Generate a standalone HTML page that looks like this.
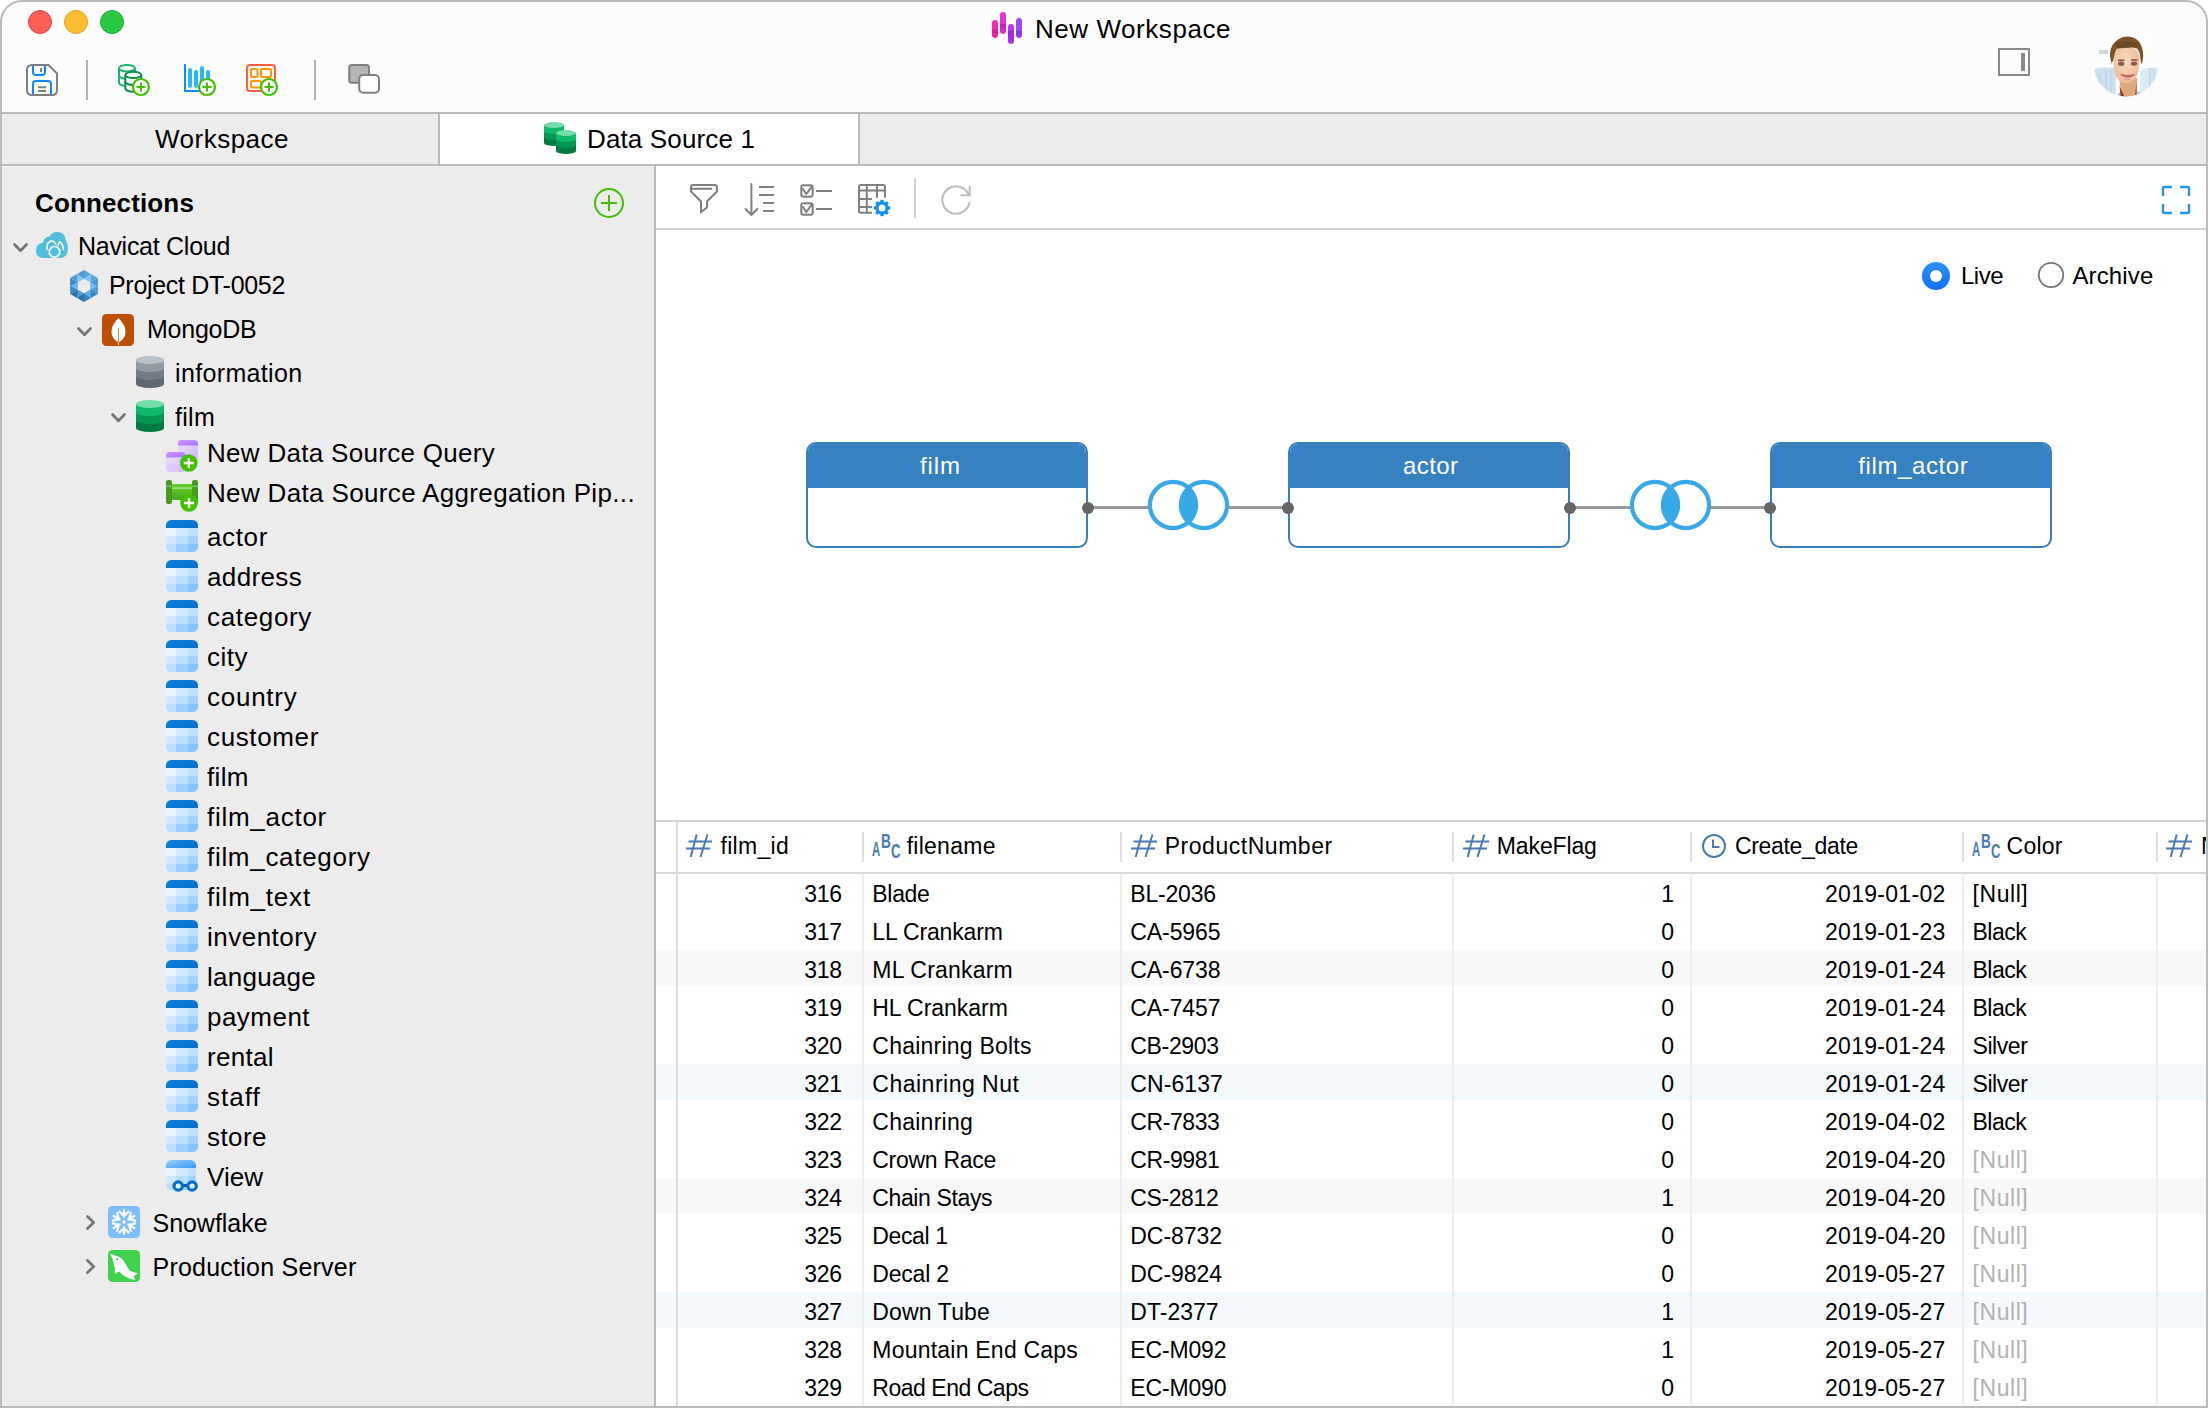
<!DOCTYPE html>
<html lang="en"><head><meta charset="utf-8"><title>New Workspace</title>
<style>
html,body{margin:0;padding:0}
body{width:2208px;height:1408px;background:#fff;overflow:hidden;position:relative;font-family:"Liberation Sans",sans-serif;color:#000}
.a{position:absolute;display:block}
.t{position:absolute;white-space:pre;display:block}
#win{position:absolute;left:0;top:0;width:2208px;height:1408px;border-radius:22px 22px 0 0;overflow:hidden;background:#fcfcfc}
#frame{position:absolute;left:0;top:0;width:2204px;height:1404px;border:2px solid #bbb;border-radius:22px 22px 0 0;pointer-events:none}
</style></head><body>
<div id="win">
<div class="a" style="left:28px;top:10px;width:22px;height:22px;border-radius:50%;background:#fe5f57;border:1px solid #e0443e"></div>
<div class="a" style="left:64px;top:10px;width:22px;height:22px;border-radius:50%;background:#febc2e;border:1px solid #dea123"></div>
<div class="a" style="left:100px;top:10px;width:22px;height:22px;border-radius:50%;background:#28c840;border:1px solid #1aab29"></div>
<div class="a" style="left:992px;top:20px;width:6px;height:18px;background:linear-gradient(180deg,#f22bb5 0%,#f22bb5 50%,#d41c98 54%,#f22bb5 100%);border-radius:3px"></div>
<div class="a" style="left:1000px;top:12px;width:6px;height:22px;background:linear-gradient(180deg,#e535cf 0%,#e535cf 52%,#c21cab 56%,#e535cf 100%);border-radius:3px"></div>
<div class="a" style="left:1008px;top:24px;width:6px;height:20px;background:linear-gradient(180deg,#b833ff 0%,#b833ff 32%,#9a27d6 36%,#b833ff 100%);border-radius:3px"></div>
<div class="a" style="left:1016px;top:18px;width:6px;height:20px;background:linear-gradient(180deg,#9b48ff 0%,#9b48ff 62%,#7b36d8 66%,#9b48ff 100%);border-radius:3px"></div>
<span class="t" style="left:1035.00px;top:11.99px;font-size:26px;line-height:34px;letter-spacing:0.553px;">New Workspace</span>
<svg class="a" style="left:26px;top:64px" width="32" height="32" viewBox="0 0 32 32"><path d="M6,1 H22.5 L31,9.5 V26 Q31,31 26,31 H6 Q1,31 1,26 V6 Q1,1 6,1 Z" fill="#fff" stroke="#7f7f7f" stroke-width="2" stroke-linejoin="round"/><path d="M7,2 V8 Q7,11 10,11 H16 Q19,11 19,8 V2" fill="none" stroke="#0a8cff" stroke-width="2"/><path d="M15,4 V8" stroke="#7f7f7f" stroke-width="2"/><path d="M7,30 V20 Q7,17 10,17 H22 Q25,17 25,20 V30" fill="none" stroke="#0a8cff" stroke-width="2"/><path d="M12,23.2 H20 M12,27 H20" stroke="#7f7f7f" stroke-width="2"/></svg>
<div class="a" style="left:86px;top:60px;width:2px;height:40px;background:#b4b4b4;"></div>
<div class="a" style="left:314px;top:60px;width:2px;height:40px;background:#b4b4b4;"></div>
<svg class="a" style="left:116px;top:62px" width="36" height="36" viewBox="0 0 36 36"><path d="M3,6.2 V20.8 A8.0,3.2 0 0 0 19,20.8 V6.2" fill="#fcfcfc" stroke="#1db36b" stroke-width="2"/><ellipse cx="11.0" cy="6.2" rx="8.0" ry="3.2" fill="#fcfcfc" stroke="#1db36b" stroke-width="2"/><path d="M3,13.5 A8.0,3.2 0 0 0 19,13.5" fill="none" stroke="#1db36b" stroke-width="2"/><path d="M9.3,12.899999999999999 V26.5 A8.0,3.2 0 0 0 25.3,26.5 V12.899999999999999" fill="#fcfcfc" stroke="#0a8f4e" stroke-width="2"/><ellipse cx="17.3" cy="12.899999999999999" rx="8.0" ry="3.2" fill="#fcfcfc" stroke="#0a8f4e" stroke-width="2"/><path d="M9.3,19.7 A8.0,3.2 0 0 0 25.3,19.7" fill="none" stroke="#0a8f4e" stroke-width="2"/><circle cx="24.9" cy="25" r="8" fill="#fff" stroke="#42be00" stroke-width="2.2"/><path d="M20.4,25 H29.4 M24.9,20.5 V29.5" stroke="#42be00" stroke-width="2.2"/></svg>
<svg class="a" style="left:182px;top:62px" width="36" height="36" viewBox="0 0 36 36"><path d="M3,2 V29 H19" fill="none" stroke="#0a8cff" stroke-width="2"/><path d="M8,8 V24 M14,10 V24 M20,6 V24 M26,10 V24" stroke="#2bb5ff" stroke-width="4" stroke-linecap="round"/><circle cx="25" cy="25" r="8" fill="#fff" stroke="#42be00" stroke-width="2.2"/><path d="M20.5,25 H29.5 M25,20.5 V29.5" stroke="#42be00" stroke-width="2.2"/></svg>
<svg class="a" style="left:244px;top:62px" width="36" height="36" viewBox="0 0 36 36"><rect x="3" y="3" width="28" height="26" rx="3" fill="none" stroke="#ff623b" stroke-width="2"/><rect x="7" y="7" width="6.5" height="8" rx="1.5" fill="none" stroke="#ff9500" stroke-width="2"/><rect x="17" y="7" width="10" height="8" rx="1.5" fill="none" stroke="#ff9500" stroke-width="2"/><rect x="7" y="19" width="10" height="6.5" rx="1.5" fill="none" stroke="#ff9500" stroke-width="2"/><circle cx="25" cy="25" r="8" fill="#fff" stroke="#42be00" stroke-width="2.2"/><path d="M20.5,25 H29.5 M25,20.5 V29.5" stroke="#42be00" stroke-width="2.2"/></svg>
<svg class="a" style="left:346px;top:62px" width="36" height="34" viewBox="0 0 36 34"><rect x="3.2" y="3" width="19.8" height="17.8" rx="2.5" fill="#b5b5b5" stroke="#7f7f7f" stroke-width="2"/><rect x="13.2" y="13" width="19.8" height="17.8" rx="4" fill="#fff" stroke="#7f7f7f" stroke-width="2"/></svg>
<svg class="a" style="left:1996px;top:46px" width="36" height="32" viewBox="0 0 36 32"><rect x="3" y="3" width="30" height="26" fill="none" stroke="#8a8a8a" stroke-width="2"/><rect x="25" y="7" width="4" height="18" fill="#8a8a8a"/></svg>
<svg class="a" style="left:2092px;top:30px" width="68" height="68" viewBox="0 0 68 68"><defs><clipPath id="av"><circle cx="34" cy="34" r="32.5"/></clipPath><radialGradient id="fg" cx=".45" cy=".4" r=".7"><stop offset="0" stop-color="#f8d9bd"/><stop offset="1" stop-color="#ecb792"/></radialGradient></defs><g clip-path="url(#av)"><rect width="68" height="68" fill="#fcfdfe"/><path d="M0,40 Q10,36 18,38 L24,37 V70 H0 Z" fill="#cfe2f0"/><path d="M8,44 V66 M14,40 V68 M19,40 V68" stroke="#b9d3e8" stroke-width="2.5" opacity=".7"/><path d="M48,40 Q58,36 68,38 V70 H48 Z" fill="#dcecf6"/><path d="M58,38 V62 M62,38 V58" stroke="#bcd6e8" stroke-width="2.5" opacity=".7"/><rect x="7" y="20" width="9" height="4" fill="#cdd9d8"/><path d="M24,66 L30,60 H42 L52,64 L50,70 H24 Z" fill="#a9b9ec"/><path d="M27,48 H45 V68 H30 Z" fill="#dfa57c"/><path d="M27.5,56 L33,68 H29 Z" fill="#8b3510"/><path d="M44.5,54 V68 H42.5 Z" fill="#9a4a20"/><path d="M21.3,30 Q21,16.5 34.3,16.5 Q47.6,16.5 47.4,30 Q47.6,44 42,50 Q38,53.5 34.3,53.5 Q30.5,53.5 26.5,50 Q21.3,44 21.3,30 Z" fill="url(#fg)"/><path d="M19.5,33 Q16,23 20.5,15 Q26,6.5 36,6.5 Q46,7 49.5,16 Q52.5,24 50,34 Q48.5,33 48.3,28 Q48,22 45,18.5 Q36,16 25,18.5 Q22.5,22 22,27 Q21.5,31 19.5,33 Z" fill="#7d5228"/><path d="M24,14 Q34,8 47,15 Q40,18 25,18.5 Z" fill="#6a4a22"/><ellipse cx="29.2" cy="33.8" rx="3.2" ry="2.2" fill="#8a5a45"/><ellipse cx="42" cy="33.6" rx="3.2" ry="2.2" fill="#8a5a50"/><path d="M26,30.3 H32.5 M39,30 H45.5" stroke="#8a4a2a" stroke-width="1.6"/><path d="M29,44.5 Q35.5,49.5 42.5,44.5 Q35.5,47 29,44.5 Z" fill="#f7e6e6" stroke="#c0625f" stroke-width="1.4"/><path d="M32,49.5 H39" stroke="#e89a9a" stroke-width="1.6"/></g></svg>
<div class="a" style="left:0px;top:112px;width:2208px;height:2px;background:#bababa;"></div>
<div class="a" style="left:0px;top:114px;width:2208px;height:50px;background:#ececec;"></div>
<div class="a" style="left:440px;top:114px;width:418px;height:52px;background:#fff;"></div>
<div class="a" style="left:438px;top:114px;width:2px;height:50px;background:#bababa;"></div>
<div class="a" style="left:858px;top:114px;width:2px;height:50px;background:#bababa;"></div>
<div class="a" style="left:0px;top:164px;width:440px;height:2px;background:#bababa;"></div>
<div class="a" style="left:858px;top:164px;width:1350px;height:2px;background:#bababa;"></div>
<div class="a" style="left:440px;top:164px;width:418px;height:2px;background:#bababa;"></div>
<span class="t" style="left:155.00px;top:122.49px;font-size:26px;line-height:34px;letter-spacing:0.492px;">Workspace</span>
<span class="t" style="left:587.00px;top:122.49px;font-size:26px;line-height:34px;letter-spacing:0.137px;">Data Source 1</span>
<svg class="a" style="left:542px;top:120px" width="36" height="36" viewBox="0 0 36 36"><path d="M2,5 V23 A10.0,3 0 0 0 22,23 V5 Z" fill="#007a41"/><path d="M2,5 V17.0 A10.0,3 0 0 0 22,17.0 V5 Z" fill="#059652"/><path d="M2,5 V11.0 A10.0,3 0 0 0 22,11.0 V5 Z" fill="#0db96b"/><ellipse cx="12.0" cy="5" rx="10.0" ry="3" fill="#74deab"/><path d="M14,13 V31 A10.0,3 0 0 0 34,31 V13 Z" fill="#007a41"/><path d="M14,13 V25.0 A10.0,3 0 0 0 34,25.0 V13 Z" fill="#059652"/><path d="M14,13 V19.0 A10.0,3 0 0 0 34,19.0 V13 Z" fill="#0db96b"/><ellipse cx="24.0" cy="13" rx="10.0" ry="3" fill="#74deab"/></svg>
<div class="a" style="left:0px;top:166px;width:654px;height:1242px;background:#ececec;"></div>
<div class="a" style="left:654px;top:166px;width:2px;height:1242px;background:#bababa;"></div>
<div class="a" style="left:0px;top:166px;width:654px;height:1px;background:#f1f1f1;"></div>
<span class="t" style="left:35.00px;top:185.99px;font-size:26px;line-height:34px;letter-spacing:0.140px;font-weight:700;">Connections</span>
<svg class="a" style="left:592px;top:186px" width="34" height="34" viewBox="0 0 34 34"><circle cx="17" cy="17" r="14" fill="none" stroke="#42be00" stroke-width="2"/><path d="M9,17 H25 M17,9 V25" stroke="#42be00" stroke-width="2"/></svg>
<svg class="a" style="left:11px;top:241px" width="20" height="14" viewBox="0 0 20 14"><path d="M3.5,3.5 L9.5,9.7 L15.5,3.5" fill="none" stroke="#767676" stroke-width="2.8" stroke-linecap="round" stroke-linejoin="round"/></svg>
<svg class="a" style="left:36px;top:230px" width="34" height="30" viewBox="0 0 34 30"><path d="M8,28 Q0,28 0,20.5 Q0,13.5 7,12.5 Q8,7 13.5,6.5 Q16,1.5 22,2 Q29,2.5 29.5,10 Q32,13 32,18 Q32,28 23,28 Z" fill="#4fbfdc"/><circle cx="18.5" cy="21.8" r="5.3" fill="none" stroke="#fff" stroke-width="1.7"/><path d="M11.2,19.5 Q10,13 15,11 Q18.5,10.5 19.8,14.5" fill="none" stroke="#fff" stroke-width="1.6" stroke-linecap="round"/><path d="M22.3,15.5 Q22.5,12.5 23.8,11.8 Q27.5,14.5 27.3,19.5" fill="none" stroke="#fff" stroke-width="1.6" stroke-linecap="round"/></svg>
<span class="t" style="left:78.00px;top:229.64px;font-size:25px;line-height:32px;letter-spacing:-0.279px;">Navicat Cloud</span>
<svg class="a" style="left:70px;top:270px" width="28" height="32" viewBox="0 0 28 32"><path d="M14.0,0.0 L27.9,8.0 L20.5,12.2 L14.0,8.5 Z" fill="#5aa9dd"/><path d="M20.9,4.0 L20.5,12.2 L14.0,8.5 Z" fill="#7fc8ff"/><path d="M27.9,8.0 L27.9,24.0 L20.5,19.8 L20.5,12.2 Z" fill="#4a97cf"/><path d="M27.9,16.0 L20.5,19.8 L20.5,12.2 Z" fill="#6bbcf7"/><path d="M27.9,24.0 L14.0,32.0 L14.0,23.5 L20.5,19.8 Z" fill="#3b84bd"/><path d="M20.9,28.0 L14.0,23.5 L20.5,19.8 Z" fill="#5aaeee"/><path d="M14.0,32.0 L0.1,24.0 L7.5,19.8 L14.0,23.5 Z" fill="#2f6fa3"/><path d="M7.1,28.0 L7.5,19.8 L14.0,23.5 Z" fill="#4f9fe0"/><path d="M0.1,24.0 L0.1,8.0 L7.5,12.2 L7.5,19.8 Z" fill="#3d89c4"/><path d="M0.1,16.0 L7.5,12.2 L7.5,19.8 Z" fill="#66b8f5"/><path d="M0.1,8.0 L14.0,0.0 L14.0,8.5 L7.5,12.2 Z" fill="#4b9bd4"/><path d="M7.1,4.0 L14.0,8.5 L7.5,12.2 Z" fill="#86ccff"/></svg>
<span class="t" style="left:109.00px;top:268.84px;font-size:25px;line-height:32px;letter-spacing:-0.309px;">Project DT-0052</span>
<svg class="a" style="left:75px;top:325px" width="20" height="14" viewBox="0 0 20 14"><path d="M3.5,3.5 L9.5,9.7 L15.5,3.5" fill="none" stroke="#767676" stroke-width="2.8" stroke-linecap="round" stroke-linejoin="round"/></svg>
<svg class="a" style="left:102px;top:314px" width="32" height="32" viewBox="0 0 32 32"><rect width="32" height="32" rx="4.5" fill="#bf4f00"/><path d="M16.5,4 Q23.5,11 23.5,17.5 Q23.5,24.5 17.2,28 L17,31 H16 L15.8,28 Q9.5,24.5 9.5,17.5 Q9.5,11 16.5,4 Z" fill="#fff"/><path d="M16.5,14 V29" stroke="#d98a55" stroke-width="1"/></svg>
<span class="t" style="left:147.00px;top:313.34px;font-size:25px;line-height:32px;letter-spacing:-0.238px;">MongoDB</span>
<svg class="a" style="left:136px;top:356px" width="28" height="32" viewBox="0 0 28 32"><path d="M0,4 V28 A14.0,4 0 0 0 28,28 V4 Z" fill="#5f6772"/><path d="M0,4 V20.0 A14.0,4 0 0 0 28,20.0 V4 Z" fill="#737d88"/><path d="M0,4 V12.0 A14.0,4 0 0 0 28,12.0 V4 Z" fill="#949ba4"/><ellipse cx="14.0" cy="4" rx="14.0" ry="4" fill="#bbc0c8"/></svg>
<span class="t" style="left:175.00px;top:357.04px;font-size:25px;line-height:32px;letter-spacing:0.349px;">information</span>
<svg class="a" style="left:109px;top:411px" width="20" height="14" viewBox="0 0 20 14"><path d="M3.5,3.5 L9.5,9.7 L15.5,3.5" fill="none" stroke="#767676" stroke-width="2.8" stroke-linecap="round" stroke-linejoin="round"/></svg>
<svg class="a" style="left:136px;top:400px" width="28" height="32" viewBox="0 0 28 32"><path d="M0,4 V28 A14.0,4 0 0 0 28,28 V4 Z" fill="#007a41"/><path d="M0,4 V20.0 A14.0,4 0 0 0 28,20.0 V4 Z" fill="#059652"/><path d="M0,4 V12.0 A14.0,4 0 0 0 28,12.0 V4 Z" fill="#0db96b"/><ellipse cx="14.0" cy="4" rx="14.0" ry="4" fill="#74deab"/></svg>
<span class="t" style="left:175.00px;top:400.94px;font-size:25px;line-height:32px;letter-spacing:0.280px;">film</span>
<svg class="a" style="left:164px;top:438px" width="36" height="36" viewBox="0 0 36 36"><defs><linearGradient id="pg" x1="0" y1="0" x2="1" y2="1"><stop offset="0" stop-color="#cf9bff"/><stop offset="1" stop-color="#a470ff"/></linearGradient></defs><g><clipPath id="c1"><rect x="14" y="2" width="20" height="20" rx="3.5"/></clipPath><g clip-path="url(#c1)"><rect x="14" y="2" width="20" height="20" fill="#e6d6ff"/><rect x="14" y="2" width="20" height="5.5" fill="url(#pg)"/><rect x="20.6" y="7.5" width="6.800000000000001" height="20" fill="#dcc8ff" opacity=".6"/><rect x="27.4" y="7.5" width="6.800000000000001" height="20" fill="#d2b8ff" opacity=".7"/><rect x="14" y="14.4" width="20" height="20" fill="#cfb5ff" opacity=".35"/></g></g><g><clipPath id="c2"><rect x="2" y="14" width="19.5" height="20" rx="3.5"/></clipPath><g clip-path="url(#c2)"><rect x="2" y="14" width="19.5" height="20" fill="#e6d6ff"/><rect x="2" y="14" width="19.5" height="5.5" fill="url(#pg)"/><rect x="8.435" y="19.5" width="6.630000000000001" height="20" fill="#dcc8ff" opacity=".6"/><rect x="15.065000000000001" y="19.5" width="6.630000000000001" height="20" fill="#d2b8ff" opacity=".7"/><rect x="2" y="26.4" width="19.5" height="20" fill="#cfb5ff" opacity=".35"/></g></g><circle cx="24.8" cy="25" r="8.8" fill="#40c200"/><path d="M19.8,25 H29.8 M24.8,20 V30" stroke="#fff" stroke-width="2.4"/></svg>
<span class="t" style="left:207.00px;top:436.09px;font-size:26px;line-height:34px;letter-spacing:0.295px;">New Data Source Query</span>
<svg class="a" style="left:164px;top:478px" width="36" height="36" viewBox="0 0 36 36"><defs><linearGradient id="gg" x1="0" y1="0" x2="0" y2="1"><stop offset="0" stop-color="#62d02a"/><stop offset="1" stop-color="#4aa620"/></linearGradient></defs><rect x="7" y="6" width="22" height="16" fill="url(#gg)"/><rect x="7" y="9.2" width="22" height="1.8" fill="#a5e38a" opacity=".8"/><rect x="2" y="2" width="6" height="24" rx="2" fill="#459a1e"/><rect x="28" y="2" width="6" height="24" rx="2" fill="#459a1e"/><rect x="2" y="7.5" width="6" height="1.6" fill="#7dc25c"/><rect x="28" y="7.5" width="6" height="1.6" fill="#7dc25c"/><circle cx="25" cy="25" r="8.8" fill="#40c200"/><path d="M20,25 H30 M25,20 V30" stroke="#fff" stroke-width="2.4"/></svg>
<span class="t" style="left:207.00px;top:475.89px;font-size:26px;line-height:34px;letter-spacing:0.345px;">New Data Source Aggregation Pip...</span>
<svg class="a" style="left:166px;top:520px" width="32" height="32" viewBox="0 0 32 32"><defs><clipPath id="t0"><rect width="32" height="32" rx="5.5"/></clipPath><linearGradient id="t0h" x1="0" y1="0" x2="1" y2="1"><stop offset="0" stop-color="#0a80d8"/><stop offset="1" stop-color="#0670c8"/></linearGradient></defs><g clip-path="url(#t0)"><rect width="32" height="32" fill="#cfe7ff"/><rect x="0" y="8" width="10" height="8" fill="#e8f3ff"/><rect x="10" y="8" width="12" height="8" fill="#d2e9ff"/><rect x="22" y="8" width="10" height="8" fill="#bfdfff"/><rect x="0" y="16" width="10" height="8" fill="#d2e9ff"/><rect x="10" y="16" width="12" height="8" fill="#bcdeff"/><rect x="22" y="16" width="10" height="8" fill="#a3d2ff"/><rect x="0" y="24" width="10" height="8" fill="#bcdeff"/><rect x="10" y="24" width="12" height="8" fill="#9dcfff"/><rect x="22" y="24" width="10" height="8" fill="#85c4ff"/><rect width="32" height="8" fill="url(#t0h)"/></g></svg>
<span class="t" style="left:207.00px;top:520.19px;font-size:26px;line-height:34px;letter-spacing:0.639px;">actor</span>
<svg class="a" style="left:166px;top:560px" width="32" height="32" viewBox="0 0 32 32"><defs><clipPath id="t1"><rect width="32" height="32" rx="5.5"/></clipPath><linearGradient id="t1h" x1="0" y1="0" x2="1" y2="1"><stop offset="0" stop-color="#0a80d8"/><stop offset="1" stop-color="#0670c8"/></linearGradient></defs><g clip-path="url(#t1)"><rect width="32" height="32" fill="#cfe7ff"/><rect x="0" y="8" width="10" height="8" fill="#e8f3ff"/><rect x="10" y="8" width="12" height="8" fill="#d2e9ff"/><rect x="22" y="8" width="10" height="8" fill="#bfdfff"/><rect x="0" y="16" width="10" height="8" fill="#d2e9ff"/><rect x="10" y="16" width="12" height="8" fill="#bcdeff"/><rect x="22" y="16" width="10" height="8" fill="#a3d2ff"/><rect x="0" y="24" width="10" height="8" fill="#bcdeff"/><rect x="10" y="24" width="12" height="8" fill="#9dcfff"/><rect x="22" y="24" width="10" height="8" fill="#85c4ff"/><rect width="32" height="8" fill="url(#t1h)"/></g></svg>
<span class="t" style="left:207.00px;top:560.19px;font-size:26px;line-height:34px;letter-spacing:0.357px;">address</span>
<svg class="a" style="left:166px;top:600px" width="32" height="32" viewBox="0 0 32 32"><defs><clipPath id="t2"><rect width="32" height="32" rx="5.5"/></clipPath><linearGradient id="t2h" x1="0" y1="0" x2="1" y2="1"><stop offset="0" stop-color="#0a80d8"/><stop offset="1" stop-color="#0670c8"/></linearGradient></defs><g clip-path="url(#t2)"><rect width="32" height="32" fill="#cfe7ff"/><rect x="0" y="8" width="10" height="8" fill="#e8f3ff"/><rect x="10" y="8" width="12" height="8" fill="#d2e9ff"/><rect x="22" y="8" width="10" height="8" fill="#bfdfff"/><rect x="0" y="16" width="10" height="8" fill="#d2e9ff"/><rect x="10" y="16" width="12" height="8" fill="#bcdeff"/><rect x="22" y="16" width="10" height="8" fill="#a3d2ff"/><rect x="0" y="24" width="10" height="8" fill="#bcdeff"/><rect x="10" y="24" width="12" height="8" fill="#9dcfff"/><rect x="22" y="24" width="10" height="8" fill="#85c4ff"/><rect width="32" height="8" fill="url(#t2h)"/></g></svg>
<span class="t" style="left:207.00px;top:600.19px;font-size:26px;line-height:34px;letter-spacing:0.659px;">category</span>
<svg class="a" style="left:166px;top:640px" width="32" height="32" viewBox="0 0 32 32"><defs><clipPath id="t3"><rect width="32" height="32" rx="5.5"/></clipPath><linearGradient id="t3h" x1="0" y1="0" x2="1" y2="1"><stop offset="0" stop-color="#0a80d8"/><stop offset="1" stop-color="#0670c8"/></linearGradient></defs><g clip-path="url(#t3)"><rect width="32" height="32" fill="#cfe7ff"/><rect x="0" y="8" width="10" height="8" fill="#e8f3ff"/><rect x="10" y="8" width="12" height="8" fill="#d2e9ff"/><rect x="22" y="8" width="10" height="8" fill="#bfdfff"/><rect x="0" y="16" width="10" height="8" fill="#d2e9ff"/><rect x="10" y="16" width="12" height="8" fill="#bcdeff"/><rect x="22" y="16" width="10" height="8" fill="#a3d2ff"/><rect x="0" y="24" width="10" height="8" fill="#bcdeff"/><rect x="10" y="24" width="12" height="8" fill="#9dcfff"/><rect x="22" y="24" width="10" height="8" fill="#85c4ff"/><rect width="32" height="8" fill="url(#t3h)"/></g></svg>
<span class="t" style="left:207.00px;top:640.19px;font-size:26px;line-height:34px;letter-spacing:0.525px;">city</span>
<svg class="a" style="left:166px;top:680px" width="32" height="32" viewBox="0 0 32 32"><defs><clipPath id="t4"><rect width="32" height="32" rx="5.5"/></clipPath><linearGradient id="t4h" x1="0" y1="0" x2="1" y2="1"><stop offset="0" stop-color="#0a80d8"/><stop offset="1" stop-color="#0670c8"/></linearGradient></defs><g clip-path="url(#t4)"><rect width="32" height="32" fill="#cfe7ff"/><rect x="0" y="8" width="10" height="8" fill="#e8f3ff"/><rect x="10" y="8" width="12" height="8" fill="#d2e9ff"/><rect x="22" y="8" width="10" height="8" fill="#bfdfff"/><rect x="0" y="16" width="10" height="8" fill="#d2e9ff"/><rect x="10" y="16" width="12" height="8" fill="#bcdeff"/><rect x="22" y="16" width="10" height="8" fill="#a3d2ff"/><rect x="0" y="24" width="10" height="8" fill="#bcdeff"/><rect x="10" y="24" width="12" height="8" fill="#9dcfff"/><rect x="22" y="24" width="10" height="8" fill="#85c4ff"/><rect width="32" height="8" fill="url(#t4h)"/></g></svg>
<span class="t" style="left:207.00px;top:680.19px;font-size:26px;line-height:34px;letter-spacing:0.748px;">country</span>
<svg class="a" style="left:166px;top:720px" width="32" height="32" viewBox="0 0 32 32"><defs><clipPath id="t5"><rect width="32" height="32" rx="5.5"/></clipPath><linearGradient id="t5h" x1="0" y1="0" x2="1" y2="1"><stop offset="0" stop-color="#0a80d8"/><stop offset="1" stop-color="#0670c8"/></linearGradient></defs><g clip-path="url(#t5)"><rect width="32" height="32" fill="#cfe7ff"/><rect x="0" y="8" width="10" height="8" fill="#e8f3ff"/><rect x="10" y="8" width="12" height="8" fill="#d2e9ff"/><rect x="22" y="8" width="10" height="8" fill="#bfdfff"/><rect x="0" y="16" width="10" height="8" fill="#d2e9ff"/><rect x="10" y="16" width="12" height="8" fill="#bcdeff"/><rect x="22" y="16" width="10" height="8" fill="#a3d2ff"/><rect x="0" y="24" width="10" height="8" fill="#bcdeff"/><rect x="10" y="24" width="12" height="8" fill="#9dcfff"/><rect x="22" y="24" width="10" height="8" fill="#85c4ff"/><rect width="32" height="8" fill="url(#t5h)"/></g></svg>
<span class="t" style="left:207.00px;top:720.19px;font-size:26px;line-height:34px;letter-spacing:0.634px;">customer</span>
<svg class="a" style="left:166px;top:760px" width="32" height="32" viewBox="0 0 32 32"><defs><clipPath id="t6"><rect width="32" height="32" rx="5.5"/></clipPath><linearGradient id="t6h" x1="0" y1="0" x2="1" y2="1"><stop offset="0" stop-color="#0a80d8"/><stop offset="1" stop-color="#0670c8"/></linearGradient></defs><g clip-path="url(#t6)"><rect width="32" height="32" fill="#cfe7ff"/><rect x="0" y="8" width="10" height="8" fill="#e8f3ff"/><rect x="10" y="8" width="12" height="8" fill="#d2e9ff"/><rect x="22" y="8" width="10" height="8" fill="#bfdfff"/><rect x="0" y="16" width="10" height="8" fill="#d2e9ff"/><rect x="10" y="16" width="12" height="8" fill="#bcdeff"/><rect x="22" y="16" width="10" height="8" fill="#a3d2ff"/><rect x="0" y="24" width="10" height="8" fill="#bcdeff"/><rect x="10" y="24" width="12" height="8" fill="#9dcfff"/><rect x="22" y="24" width="10" height="8" fill="#85c4ff"/><rect width="32" height="8" fill="url(#t6h)"/></g></svg>
<span class="t" style="left:207.00px;top:760.19px;font-size:26px;line-height:34px;letter-spacing:0.316px;">film</span>
<svg class="a" style="left:166px;top:800px" width="32" height="32" viewBox="0 0 32 32"><defs><clipPath id="t7"><rect width="32" height="32" rx="5.5"/></clipPath><linearGradient id="t7h" x1="0" y1="0" x2="1" y2="1"><stop offset="0" stop-color="#0a80d8"/><stop offset="1" stop-color="#0670c8"/></linearGradient></defs><g clip-path="url(#t7)"><rect width="32" height="32" fill="#cfe7ff"/><rect x="0" y="8" width="10" height="8" fill="#e8f3ff"/><rect x="10" y="8" width="12" height="8" fill="#d2e9ff"/><rect x="22" y="8" width="10" height="8" fill="#bfdfff"/><rect x="0" y="16" width="10" height="8" fill="#d2e9ff"/><rect x="10" y="16" width="12" height="8" fill="#bcdeff"/><rect x="22" y="16" width="10" height="8" fill="#a3d2ff"/><rect x="0" y="24" width="10" height="8" fill="#bcdeff"/><rect x="10" y="24" width="12" height="8" fill="#9dcfff"/><rect x="22" y="24" width="10" height="8" fill="#85c4ff"/><rect width="32" height="8" fill="url(#t7h)"/></g></svg>
<span class="t" style="left:207.00px;top:800.19px;font-size:26px;line-height:34px;letter-spacing:0.730px;">film_actor</span>
<svg class="a" style="left:166px;top:840px" width="32" height="32" viewBox="0 0 32 32"><defs><clipPath id="t8"><rect width="32" height="32" rx="5.5"/></clipPath><linearGradient id="t8h" x1="0" y1="0" x2="1" y2="1"><stop offset="0" stop-color="#0a80d8"/><stop offset="1" stop-color="#0670c8"/></linearGradient></defs><g clip-path="url(#t8)"><rect width="32" height="32" fill="#cfe7ff"/><rect x="0" y="8" width="10" height="8" fill="#e8f3ff"/><rect x="10" y="8" width="12" height="8" fill="#d2e9ff"/><rect x="22" y="8" width="10" height="8" fill="#bfdfff"/><rect x="0" y="16" width="10" height="8" fill="#d2e9ff"/><rect x="10" y="16" width="12" height="8" fill="#bcdeff"/><rect x="22" y="16" width="10" height="8" fill="#a3d2ff"/><rect x="0" y="24" width="10" height="8" fill="#bcdeff"/><rect x="10" y="24" width="12" height="8" fill="#9dcfff"/><rect x="22" y="24" width="10" height="8" fill="#85c4ff"/><rect width="32" height="8" fill="url(#t8h)"/></g></svg>
<span class="t" style="left:207.00px;top:840.19px;font-size:26px;line-height:34px;letter-spacing:0.698px;">film_category</span>
<svg class="a" style="left:166px;top:880px" width="32" height="32" viewBox="0 0 32 32"><defs><clipPath id="t9"><rect width="32" height="32" rx="5.5"/></clipPath><linearGradient id="t9h" x1="0" y1="0" x2="1" y2="1"><stop offset="0" stop-color="#0a80d8"/><stop offset="1" stop-color="#0670c8"/></linearGradient></defs><g clip-path="url(#t9)"><rect width="32" height="32" fill="#cfe7ff"/><rect x="0" y="8" width="10" height="8" fill="#e8f3ff"/><rect x="10" y="8" width="12" height="8" fill="#d2e9ff"/><rect x="22" y="8" width="10" height="8" fill="#bfdfff"/><rect x="0" y="16" width="10" height="8" fill="#d2e9ff"/><rect x="10" y="16" width="12" height="8" fill="#bcdeff"/><rect x="22" y="16" width="10" height="8" fill="#a3d2ff"/><rect x="0" y="24" width="10" height="8" fill="#bcdeff"/><rect x="10" y="24" width="12" height="8" fill="#9dcfff"/><rect x="22" y="24" width="10" height="8" fill="#85c4ff"/><rect width="32" height="8" fill="url(#t9h)"/></g></svg>
<span class="t" style="left:207.00px;top:880.19px;font-size:26px;line-height:34px;letter-spacing:0.788px;">film_text</span>
<svg class="a" style="left:166px;top:920px" width="32" height="32" viewBox="0 0 32 32"><defs><clipPath id="t10"><rect width="32" height="32" rx="5.5"/></clipPath><linearGradient id="t10h" x1="0" y1="0" x2="1" y2="1"><stop offset="0" stop-color="#0a80d8"/><stop offset="1" stop-color="#0670c8"/></linearGradient></defs><g clip-path="url(#t10)"><rect width="32" height="32" fill="#cfe7ff"/><rect x="0" y="8" width="10" height="8" fill="#e8f3ff"/><rect x="10" y="8" width="12" height="8" fill="#d2e9ff"/><rect x="22" y="8" width="10" height="8" fill="#bfdfff"/><rect x="0" y="16" width="10" height="8" fill="#d2e9ff"/><rect x="10" y="16" width="12" height="8" fill="#bcdeff"/><rect x="22" y="16" width="10" height="8" fill="#a3d2ff"/><rect x="0" y="24" width="10" height="8" fill="#bcdeff"/><rect x="10" y="24" width="12" height="8" fill="#9dcfff"/><rect x="22" y="24" width="10" height="8" fill="#85c4ff"/><rect width="32" height="8" fill="url(#t10h)"/></g></svg>
<span class="t" style="left:207.00px;top:920.19px;font-size:26px;line-height:34px;letter-spacing:0.488px;">inventory</span>
<svg class="a" style="left:166px;top:960px" width="32" height="32" viewBox="0 0 32 32"><defs><clipPath id="t11"><rect width="32" height="32" rx="5.5"/></clipPath><linearGradient id="t11h" x1="0" y1="0" x2="1" y2="1"><stop offset="0" stop-color="#0a80d8"/><stop offset="1" stop-color="#0670c8"/></linearGradient></defs><g clip-path="url(#t11)"><rect width="32" height="32" fill="#cfe7ff"/><rect x="0" y="8" width="10" height="8" fill="#e8f3ff"/><rect x="10" y="8" width="12" height="8" fill="#d2e9ff"/><rect x="22" y="8" width="10" height="8" fill="#bfdfff"/><rect x="0" y="16" width="10" height="8" fill="#d2e9ff"/><rect x="10" y="16" width="12" height="8" fill="#bcdeff"/><rect x="22" y="16" width="10" height="8" fill="#a3d2ff"/><rect x="0" y="24" width="10" height="8" fill="#bcdeff"/><rect x="10" y="24" width="12" height="8" fill="#9dcfff"/><rect x="22" y="24" width="10" height="8" fill="#85c4ff"/><rect width="32" height="8" fill="url(#t11h)"/></g></svg>
<span class="t" style="left:207.00px;top:960.19px;font-size:26px;line-height:34px;letter-spacing:0.250px;">language</span>
<svg class="a" style="left:166px;top:1000px" width="32" height="32" viewBox="0 0 32 32"><defs><clipPath id="t12"><rect width="32" height="32" rx="5.5"/></clipPath><linearGradient id="t12h" x1="0" y1="0" x2="1" y2="1"><stop offset="0" stop-color="#0a80d8"/><stop offset="1" stop-color="#0670c8"/></linearGradient></defs><g clip-path="url(#t12)"><rect width="32" height="32" fill="#cfe7ff"/><rect x="0" y="8" width="10" height="8" fill="#e8f3ff"/><rect x="10" y="8" width="12" height="8" fill="#d2e9ff"/><rect x="22" y="8" width="10" height="8" fill="#bfdfff"/><rect x="0" y="16" width="10" height="8" fill="#d2e9ff"/><rect x="10" y="16" width="12" height="8" fill="#bcdeff"/><rect x="22" y="16" width="10" height="8" fill="#a3d2ff"/><rect x="0" y="24" width="10" height="8" fill="#bcdeff"/><rect x="10" y="24" width="12" height="8" fill="#9dcfff"/><rect x="22" y="24" width="10" height="8" fill="#85c4ff"/><rect width="32" height="8" fill="url(#t12h)"/></g></svg>
<span class="t" style="left:207.00px;top:1000.19px;font-size:26px;line-height:34px;letter-spacing:0.468px;">payment</span>
<svg class="a" style="left:166px;top:1040px" width="32" height="32" viewBox="0 0 32 32"><defs><clipPath id="t13"><rect width="32" height="32" rx="5.5"/></clipPath><linearGradient id="t13h" x1="0" y1="0" x2="1" y2="1"><stop offset="0" stop-color="#0a80d8"/><stop offset="1" stop-color="#0670c8"/></linearGradient></defs><g clip-path="url(#t13)"><rect width="32" height="32" fill="#cfe7ff"/><rect x="0" y="8" width="10" height="8" fill="#e8f3ff"/><rect x="10" y="8" width="12" height="8" fill="#d2e9ff"/><rect x="22" y="8" width="10" height="8" fill="#bfdfff"/><rect x="0" y="16" width="10" height="8" fill="#d2e9ff"/><rect x="10" y="16" width="12" height="8" fill="#bcdeff"/><rect x="22" y="16" width="10" height="8" fill="#a3d2ff"/><rect x="0" y="24" width="10" height="8" fill="#bcdeff"/><rect x="10" y="24" width="12" height="8" fill="#9dcfff"/><rect x="22" y="24" width="10" height="8" fill="#85c4ff"/><rect width="32" height="8" fill="url(#t13h)"/></g></svg>
<span class="t" style="left:207.00px;top:1040.19px;font-size:26px;line-height:34px;letter-spacing:0.293px;">rental</span>
<svg class="a" style="left:166px;top:1080px" width="32" height="32" viewBox="0 0 32 32"><defs><clipPath id="t14"><rect width="32" height="32" rx="5.5"/></clipPath><linearGradient id="t14h" x1="0" y1="0" x2="1" y2="1"><stop offset="0" stop-color="#0a80d8"/><stop offset="1" stop-color="#0670c8"/></linearGradient></defs><g clip-path="url(#t14)"><rect width="32" height="32" fill="#cfe7ff"/><rect x="0" y="8" width="10" height="8" fill="#e8f3ff"/><rect x="10" y="8" width="12" height="8" fill="#d2e9ff"/><rect x="22" y="8" width="10" height="8" fill="#bfdfff"/><rect x="0" y="16" width="10" height="8" fill="#d2e9ff"/><rect x="10" y="16" width="12" height="8" fill="#bcdeff"/><rect x="22" y="16" width="10" height="8" fill="#a3d2ff"/><rect x="0" y="24" width="10" height="8" fill="#bcdeff"/><rect x="10" y="24" width="12" height="8" fill="#9dcfff"/><rect x="22" y="24" width="10" height="8" fill="#85c4ff"/><rect width="32" height="8" fill="url(#t14h)"/></g></svg>
<span class="t" style="left:207.00px;top:1080.19px;font-size:26px;line-height:34px;letter-spacing:1.008px;">staff</span>
<svg class="a" style="left:166px;top:1120px" width="32" height="32" viewBox="0 0 32 32"><defs><clipPath id="t15"><rect width="32" height="32" rx="5.5"/></clipPath><linearGradient id="t15h" x1="0" y1="0" x2="1" y2="1"><stop offset="0" stop-color="#0a80d8"/><stop offset="1" stop-color="#0670c8"/></linearGradient></defs><g clip-path="url(#t15)"><rect width="32" height="32" fill="#cfe7ff"/><rect x="0" y="8" width="10" height="8" fill="#e8f3ff"/><rect x="10" y="8" width="12" height="8" fill="#d2e9ff"/><rect x="22" y="8" width="10" height="8" fill="#bfdfff"/><rect x="0" y="16" width="10" height="8" fill="#d2e9ff"/><rect x="10" y="16" width="12" height="8" fill="#bcdeff"/><rect x="22" y="16" width="10" height="8" fill="#a3d2ff"/><rect x="0" y="24" width="10" height="8" fill="#bcdeff"/><rect x="10" y="24" width="12" height="8" fill="#9dcfff"/><rect x="22" y="24" width="10" height="8" fill="#85c4ff"/><rect width="32" height="8" fill="url(#t15h)"/></g></svg>
<span class="t" style="left:207.00px;top:1120.19px;font-size:26px;line-height:34px;letter-spacing:0.439px;">store</span>
<svg class="a" style="left:164px;top:1158px" width="36" height="36" viewBox="0 0 36 36"><g transform="translate(2,2)"><defs><clipPath id="tv"><rect width="30" height="30" rx="5.5"/></clipPath><linearGradient id="tvh" x1="0" y1="0" x2="1" y2="1"><stop offset="0" stop-color="#9ad0ff"/><stop offset="1" stop-color="#3596ee"/></linearGradient></defs><g clip-path="url(#tv)"><rect width="32" height="32" fill="#cfe7ff"/><rect x="0" y="8" width="10" height="8" fill="#e8f3ff"/><rect x="10" y="8" width="12" height="8" fill="#d2e9ff"/><rect x="22" y="8" width="10" height="8" fill="#bfdfff"/><rect x="0" y="16" width="10" height="8" fill="#d2e9ff"/><rect x="10" y="16" width="12" height="8" fill="#bcdeff"/><rect x="22" y="16" width="10" height="8" fill="#a3d2ff"/><rect x="0" y="24" width="10" height="8" fill="#bcdeff"/><rect x="10" y="24" width="12" height="8" fill="#9dcfff"/><rect x="22" y="24" width="10" height="8" fill="#85c4ff"/><rect width="32" height="8" fill="url(#tvh)"/></g></g><path d="M17,27.5 H25" stroke="#0a5fb5" stroke-width="3"/><circle cx="14.2" cy="28" r="4.2" fill="#e8f3ff" stroke="#0a6fcb" stroke-width="3.2"/><circle cx="28.1" cy="28" r="4.2" fill="#e8f3ff" stroke="#0a6fcb" stroke-width="3.2"/></svg>
<span class="t" style="left:207.00px;top:1160.19px;font-size:26px;line-height:34px;letter-spacing:0.027px;">View</span>
<svg class="a" style="left:84px;top:1213px" width="14" height="20" viewBox="0 0 14 20"><path d="M3.5,3.5 L9.7,9.5 L3.5,15.5" fill="none" stroke="#767676" stroke-width="2.8" stroke-linecap="round" stroke-linejoin="round"/></svg>
<svg class="a" style="left:108px;top:1206px" width="32" height="32" viewBox="0 0 32 32"><rect width="32" height="32" rx="4.5" fill="#7dbeff"/><g transform="rotate(0 16 16)"><path d="M16,4 V11 M11.6,5.6 L16,10 L20.4,5.6" fill="none" stroke="#fff" stroke-width="2.2" stroke-linecap="round" stroke-linejoin="miter"/></g><g transform="rotate(60 16 16)"><path d="M16,4 V11 M11.6,5.6 L16,10 L20.4,5.6" fill="none" stroke="#fff" stroke-width="2.2" stroke-linecap="round" stroke-linejoin="miter"/></g><g transform="rotate(120 16 16)"><path d="M16,4 V11 M11.6,5.6 L16,10 L20.4,5.6" fill="none" stroke="#fff" stroke-width="2.2" stroke-linecap="round" stroke-linejoin="miter"/></g><g transform="rotate(180 16 16)"><path d="M16,4 V11 M11.6,5.6 L16,10 L20.4,5.6" fill="none" stroke="#fff" stroke-width="2.2" stroke-linecap="round" stroke-linejoin="miter"/></g><g transform="rotate(240 16 16)"><path d="M16,4 V11 M11.6,5.6 L16,10 L20.4,5.6" fill="none" stroke="#fff" stroke-width="2.2" stroke-linecap="round" stroke-linejoin="miter"/></g><g transform="rotate(300 16 16)"><path d="M16,4 V11 M11.6,5.6 L16,10 L20.4,5.6" fill="none" stroke="#fff" stroke-width="2.2" stroke-linecap="round" stroke-linejoin="miter"/></g><rect x="14.4" y="14.4" width="3.2" height="3.2" transform="rotate(45 16 16)" fill="#fff"/></svg>
<span class="t" style="left:152.50px;top:1207.04px;font-size:25px;line-height:32px;letter-spacing:-0.038px;">Snowflake</span>
<svg class="a" style="left:84px;top:1257px" width="14" height="20" viewBox="0 0 14 20"><path d="M3.5,3.5 L9.7,9.5 L3.5,15.5" fill="none" stroke="#767676" stroke-width="2.8" stroke-linecap="round" stroke-linejoin="round"/></svg>
<svg class="a" style="left:108px;top:1250px" width="32" height="32" viewBox="0 0 32 32"><rect width="32" height="32" rx="4.5" fill="#3fd24b"/><path d="M2,4 Q5,4 8,6 Q14,7 17,13 Q20,18 22,21 Q26,22 30,23.5 Q27,25 25.5,26.5 Q27,28.5 27.5,30 Q22,29.5 18.5,27 Q14,25 11,21.5 Q9,22 7.5,24 Q6.5,20 7,17.5 Q5.5,16 5.5,12.5 Q4.5,8 2,4 Z" fill="#fff"/><circle cx="9" cy="9.2" r="1" fill="#2fb53a"/></svg>
<span class="t" style="left:152.50px;top:1251.04px;font-size:25px;line-height:32px;letter-spacing:0.230px;">Production Server</span>
<div class="a" style="left:656px;top:166px;width:1552px;height:1242px;background:#fff;"></div>
<div class="a" style="left:656px;top:228px;width:1552px;height:2px;background:#d2d2d2;"></div>
<svg class="a" style="left:688px;top:182px" width="32" height="34" viewBox="0 0 32 34"><path d="M3,5 Q3,3 5,3 H27 Q29,3 29,5 V9.5 L19,19.5 V25.5 L13,30 V19.5 L3,9.5 Z M3,6.8 H24" fill="none" stroke="#7f7f7f" stroke-width="2" stroke-linejoin="miter"/></svg>
<svg class="a" style="left:742px;top:182px" width="36" height="36" viewBox="0 0 36 36"><path d="M9.4,2 V32 M3.5,27 L9.4,33 L15.3,27" fill="none" stroke="#7f7f7f" stroke-width="2" stroke-linecap="round" stroke-linejoin="round"/><path d="M17,5 H32 M17,13 H32 M21,21 H32 M21,29 H32" stroke="#7f7f7f" stroke-width="2"/></svg>
<svg class="a" style="left:800px;top:182px" width="34" height="36" viewBox="0 0 34 36"><rect x="1.3" y="3.3" width="11.4" height="11.4" rx="2" fill="none" stroke="#7f7f7f" stroke-width="2"/><path d="M2.5,6.3 L6.3,12.100000000000001 L12.3,3.8" fill="none" stroke="#7f7f7f" stroke-width="2"/><path d="M16,9.0 H32" stroke="#7f7f7f" stroke-width="2"/><rect x="1.3" y="21.3" width="11.4" height="11.4" rx="2" fill="none" stroke="#7f7f7f" stroke-width="2"/><path d="M2.5,24.3 L6.3,30.1 L12.3,21.8" fill="none" stroke="#7f7f7f" stroke-width="2"/><path d="M16,27.0 H32" stroke="#7f7f7f" stroke-width="2"/></svg>
<svg class="a" style="left:856px;top:182px" width="36" height="36" viewBox="0 0 36 36"><path d="M29,15.8 V5 Q29,3 27,3 H5 Q3,3 3,5 V28.8 Q3,30.8 5,30.8 H16" fill="none" stroke="#7f7f7f" stroke-width="2"/><path d="M10.8,3 V30.8 M21,3 V15.8 M3,8.6 H29 M3,17 H16 M3,24.9 H16" stroke="#7f7f7f" stroke-width="2"/><g transform="translate(26,26)"><circle r="5" fill="#fff" stroke="#0a8cff" stroke-width="3"/><rect x="-1.7" y="-8.2" width="3.4" height="3.4" rx="1" transform="rotate(0)" fill="#0a8cff"/><rect x="-1.7" y="-8.2" width="3.4" height="3.4" rx="1" transform="rotate(45)" fill="#0a8cff"/><rect x="-1.7" y="-8.2" width="3.4" height="3.4" rx="1" transform="rotate(90)" fill="#0a8cff"/><rect x="-1.7" y="-8.2" width="3.4" height="3.4" rx="1" transform="rotate(135)" fill="#0a8cff"/><rect x="-1.7" y="-8.2" width="3.4" height="3.4" rx="1" transform="rotate(180)" fill="#0a8cff"/><rect x="-1.7" y="-8.2" width="3.4" height="3.4" rx="1" transform="rotate(225)" fill="#0a8cff"/><rect x="-1.7" y="-8.2" width="3.4" height="3.4" rx="1" transform="rotate(270)" fill="#0a8cff"/><rect x="-1.7" y="-8.2" width="3.4" height="3.4" rx="1" transform="rotate(315)" fill="#0a8cff"/></g></svg>
<div class="a" style="left:914px;top:178px;width:2px;height:40px;background:#d2d2d2;"></div>
<svg class="a" style="left:940px;top:182px" width="34" height="36" viewBox="0 0 34 36"><path d="M29.57,19.9 A13.7,13.7 0 1 1 28.87,13.31" fill="none" stroke="#bdbdbd" stroke-width="2"/><path d="M29.7,4 V13.3 H20.3" fill="none" stroke="#bdbdbd" stroke-width="2"/></svg>
<svg class="a" style="left:2160px;top:184px" width="32" height="32" viewBox="0 0 32 32"><path d="M3,12 V4.5 Q3,3 4.5,3 H12 M20,3 H27.5 Q29,3 29,4.5 V12 M29,20 V27.5 Q29,29 27.5,29 H20 M12,29 H4.5 Q3,29 3,27.5 V20" fill="none" stroke="#1a97f5" stroke-width="2.4"/></svg>
<svg class="a" style="left:1920px;top:260px" width="32" height="32" viewBox="0 0 32 32"><defs><linearGradient id="rb" x1="0" y1="0" x2="0" y2="1"><stop offset="0" stop-color="#2b8fff"/><stop offset="1" stop-color="#1271f5"/></linearGradient></defs><circle cx="16" cy="16" r="14" fill="url(#rb)"/><circle cx="16" cy="16" r="6" fill="#fff"/></svg>
<span class="t" style="left:1961.00px;top:260.18px;font-size:24px;line-height:31px;letter-spacing:-0.507px;">Live</span>
<svg class="a" style="left:2036px;top:260px" width="32" height="32" viewBox="0 0 32 32"><circle cx="15" cy="15" r="12.2" fill="#fff" stroke="#767676" stroke-width="1.8"/></svg>
<span class="t" style="left:2072.40px;top:260.18px;font-size:24px;line-height:31px;letter-spacing:0.139px;">Archive</span>
<div class="a" style="left:806px;top:441.5px;width:278px;height:102px;border:2px solid #3a7ebf;border-radius:10px;background:#fff;overflow:hidden"><div style="height:44.5px;background:#3681bf"></div></div>
<span class="t" style="left:920.11px;top:449.58px;font-size:24px;line-height:31px;letter-spacing:0.819px;color:#fff;">film</span>
<div class="a" style="left:1288px;top:441.5px;width:278px;height:102px;border:2px solid #3a7ebf;border-radius:10px;background:#fff;overflow:hidden"><div style="height:44.5px;background:#3681bf"></div></div>
<span class="t" style="left:1402.96px;top:449.58px;font-size:24px;line-height:31px;letter-spacing:0.429px;color:#fff;">actor</span>
<div class="a" style="left:1770px;top:441.5px;width:278px;height:102px;border:2px solid #3a7ebf;border-radius:10px;background:#fff;overflow:hidden"><div style="height:44.5px;background:#3681bf"></div></div>
<span class="t" style="left:1858.30px;top:449.58px;font-size:24px;line-height:31px;letter-spacing:0.597px;color:#fff;">film_actor</span>
<div class="a" style="left:1088px;top:505.7px;width:200px;height:3.8px;background:#999;"></div>
<div class="a" style="left:1082px;top:502px;width:12px;height:12px;border-radius:50%;background:#666"></div>
<div class="a" style="left:1282px;top:502px;width:12px;height:12px;border-radius:50%;background:#666"></div>
<svg class="a" style="left:1145.3px;top:476.7px" width="87.0" height="56" viewBox="0 0 87.0 56"><circle cx="28" cy="28" r="23.1" fill="#fff"/><circle cx="59.0" cy="28" r="23.1" fill="#fff"/><clipPath id="j1088"><circle cx="28" cy="28" r="23.1"/></clipPath><circle cx="59.0" cy="28" r="23.1" fill="#38a9e8" clip-path="url(#j1088)"/><circle cx="28" cy="28" r="23.1" fill="none" stroke="#38a9e8" stroke-width="4.2"/><circle cx="59.0" cy="28" r="23.1" fill="none" stroke="#38a9e8" stroke-width="4.2"/></svg>
<div class="a" style="left:1570.3px;top:505.7px;width:199.5px;height:3.8px;background:#999;"></div>
<div class="a" style="left:1564.3px;top:502px;width:12px;height:12px;border-radius:50%;background:#666"></div>
<div class="a" style="left:1763.8px;top:502px;width:12px;height:12px;border-radius:50%;background:#666"></div>
<svg class="a" style="left:1627.4px;top:476.7px" width="87.0" height="56" viewBox="0 0 87.0 56"><circle cx="28" cy="28" r="23.1" fill="#fff"/><circle cx="59.0" cy="28" r="23.1" fill="#fff"/><clipPath id="j1570"><circle cx="28" cy="28" r="23.1"/></clipPath><circle cx="59.0" cy="28" r="23.1" fill="#38a9e8" clip-path="url(#j1570)"/><circle cx="28" cy="28" r="23.1" fill="none" stroke="#38a9e8" stroke-width="4.2"/><circle cx="59.0" cy="28" r="23.1" fill="none" stroke="#38a9e8" stroke-width="4.2"/></svg>
<div class="a" style="left:656px;top:820px;width:1552px;height:2px;background:#d4d4d4;"></div>
<div class="a" style="left:656px;top:872px;width:1552px;height:2px;background:#d9d9d9;"></div>
<div class="a" style="left:656px;top:950px;width:1552px;height:36px;background:#f8f8f8;"></div>
<div class="a" style="left:656px;top:1064px;width:1552px;height:36px;background:#f4f9fe;"></div>
<div class="a" style="left:656px;top:1178px;width:1552px;height:36px;background:#f8f8f8;"></div>
<div class="a" style="left:656px;top:1292px;width:1552px;height:36px;background:#f4f9fe;"></div>
<div class="a" style="left:676px;top:822px;width:2px;height:586px;background:#dcdcdc;"></div>
<div class="a" style="left:862px;top:874px;width:2px;height:534px;background:#ededed;"></div>
<div class="a" style="left:862px;top:832px;width:2px;height:30px;background:#dedede;"></div>
<div class="a" style="left:1120px;top:874px;width:2px;height:534px;background:#ededed;"></div>
<div class="a" style="left:1120px;top:832px;width:2px;height:30px;background:#dedede;"></div>
<div class="a" style="left:1452px;top:874px;width:2px;height:534px;background:#ededed;"></div>
<div class="a" style="left:1452px;top:832px;width:2px;height:30px;background:#dedede;"></div>
<div class="a" style="left:1690px;top:874px;width:2px;height:534px;background:#ededed;"></div>
<div class="a" style="left:1690px;top:832px;width:2px;height:30px;background:#dedede;"></div>
<div class="a" style="left:1962px;top:874px;width:2px;height:534px;background:#ededed;"></div>
<div class="a" style="left:1962px;top:832px;width:2px;height:30px;background:#dedede;"></div>
<div class="a" style="left:2156px;top:874px;width:2px;height:534px;background:#ededed;"></div>
<div class="a" style="left:2156px;top:832px;width:2px;height:30px;background:#dedede;"></div>
<svg class="a" style="left:684px;top:832px" width="30" height="28" viewBox="0 0 30 28"><path d="M4.5,9.6 H28 M2,16.6 H26 M23.5,2.5 L16.5,25 M12.7,2.5 L6.7,25" stroke="#4a7ab0" stroke-width="2" fill="none"/></svg>
<span class="t" style="left:720.50px;top:831.33px;font-size:23px;line-height:30px;letter-spacing:0.291px;">film_id</span>
<span class="t" style="left:871.70px;top:836.74px;font-size:19.5px;line-height:25px;font-weight:700;color:#4a7ab0;transform:scaleX(.58);transform-origin:0 0;">A</span>
<span class="t" style="left:880.70px;top:828.74px;font-size:19.5px;line-height:25px;font-weight:700;color:#4a7ab0;transform:scaleX(.7);transform-origin:0 0;">B</span>
<span class="t" style="left:891.00px;top:838.64px;font-size:19.5px;line-height:25px;font-weight:700;color:#4a7ab0;transform:scaleX(.67);transform-origin:0 0;">C</span>
<span class="t" style="left:906.70px;top:831.33px;font-size:23px;line-height:30px;letter-spacing:0.257px;">filename</span>
<svg class="a" style="left:1129px;top:832px" width="30" height="28" viewBox="0 0 30 28"><path d="M4.5,9.6 H28 M2,16.6 H26 M23.5,2.5 L16.5,25 M12.7,2.5 L6.7,25" stroke="#4a7ab0" stroke-width="2" fill="none"/></svg>
<span class="t" style="left:1164.70px;top:831.33px;font-size:23px;line-height:30px;letter-spacing:0.532px;">ProductNumber</span>
<svg class="a" style="left:1461px;top:832px" width="30" height="28" viewBox="0 0 30 28"><path d="M4.5,9.6 H28 M2,16.6 H26 M23.5,2.5 L16.5,25 M12.7,2.5 L6.7,25" stroke="#4a7ab0" stroke-width="2" fill="none"/></svg>
<span class="t" style="left:1496.80px;top:831.33px;font-size:23px;line-height:30px;letter-spacing:-0.124px;">MakeFlag</span>
<svg class="a" style="left:1700px;top:832px" width="28" height="28" viewBox="0 0 28 28"><circle cx="14" cy="14" r="11" fill="none" stroke="#4a7ab0" stroke-width="2"/><path d="M13,7.5 V15 H19.5" fill="none" stroke="#4a7ab0" stroke-width="2"/></svg>
<span class="t" style="left:1735.00px;top:831.33px;font-size:23px;line-height:30px;letter-spacing:-0.327px;">Create_date</span>
<span class="t" style="left:1972.00px;top:836.74px;font-size:19.5px;line-height:25px;font-weight:700;color:#4a7ab0;transform:scaleX(.58);transform-origin:0 0;">A</span>
<span class="t" style="left:1981.00px;top:828.74px;font-size:19.5px;line-height:25px;font-weight:700;color:#4a7ab0;transform:scaleX(.7);transform-origin:0 0;">B</span>
<span class="t" style="left:1991.30px;top:838.64px;font-size:19.5px;line-height:25px;font-weight:700;color:#4a7ab0;transform:scaleX(.67);transform-origin:0 0;">C</span>
<span class="t" style="left:2006.60px;top:831.33px;font-size:23px;line-height:30px;letter-spacing:0.207px;">Color</span>
<svg class="a" style="left:2164px;top:832px" width="30" height="28" viewBox="0 0 30 28"><path d="M4.5,9.6 H28 M2,16.6 H26 M23.5,2.5 L16.5,25 M12.7,2.5 L6.7,25" stroke="#4a7ab0" stroke-width="2" fill="none"/></svg>
<span class="t" style="left:2201.00px;top:831.33px;font-size:23px;line-height:30px;">N</span>
<span class="t" style="left:804.27px;top:879.23px;font-size:23px;line-height:30px;letter-spacing:-0.326px;">316</span>
<span class="t" style="left:872.30px;top:879.23px;font-size:23px;line-height:30px;letter-spacing:-0.306px;">Blade</span>
<span class="t" style="left:1130.30px;top:879.23px;font-size:23px;line-height:30px;letter-spacing:-0.209px;">BL-2036</span>
<span class="t" style="left:1661.21px;top:879.23px;font-size:23px;line-height:30px;letter-spacing:-0.393px;">1</span>
<span class="t" style="left:1824.99px;top:879.23px;font-size:23px;line-height:30px;letter-spacing:0.294px;">2019-01-02</span>
<span class="t" style="left:1972.50px;top:879.23px;font-size:23px;line-height:30px;letter-spacing:0.566px;">[Null]</span>
<span class="t" style="left:804.27px;top:917.23px;font-size:23px;line-height:30px;letter-spacing:-0.326px;">317</span>
<span class="t" style="left:872.30px;top:917.23px;font-size:23px;line-height:30px;letter-spacing:-0.154px;">LL Crankarm</span>
<span class="t" style="left:1130.30px;top:917.23px;font-size:23px;line-height:30px;letter-spacing:-0.083px;">CA-5965</span>
<span class="t" style="left:1661.21px;top:917.23px;font-size:23px;line-height:30px;letter-spacing:-0.393px;">0</span>
<span class="t" style="left:1824.99px;top:917.23px;font-size:23px;line-height:30px;letter-spacing:0.294px;">2019-01-23</span>
<span class="t" style="left:1972.50px;top:917.23px;font-size:23px;line-height:30px;letter-spacing:-0.506px;">Black</span>
<span class="t" style="left:804.27px;top:955.23px;font-size:23px;line-height:30px;letter-spacing:-0.326px;">318</span>
<span class="t" style="left:872.30px;top:955.23px;font-size:23px;line-height:30px;letter-spacing:0.194px;">ML Crankarm</span>
<span class="t" style="left:1130.30px;top:955.23px;font-size:23px;line-height:30px;letter-spacing:-0.083px;">CA-6738</span>
<span class="t" style="left:1661.21px;top:955.23px;font-size:23px;line-height:30px;letter-spacing:-0.393px;">0</span>
<span class="t" style="left:1824.99px;top:955.23px;font-size:23px;line-height:30px;letter-spacing:0.294px;">2019-01-24</span>
<span class="t" style="left:1972.50px;top:955.23px;font-size:23px;line-height:30px;letter-spacing:-0.506px;">Black</span>
<span class="t" style="left:804.27px;top:993.23px;font-size:23px;line-height:30px;letter-spacing:-0.326px;">319</span>
<span class="t" style="left:872.30px;top:993.23px;font-size:23px;line-height:30px;letter-spacing:-0.037px;">HL Crankarm</span>
<span class="t" style="left:1130.30px;top:993.23px;font-size:23px;line-height:30px;letter-spacing:-0.083px;">CA-7457</span>
<span class="t" style="left:1661.21px;top:993.23px;font-size:23px;line-height:30px;letter-spacing:-0.393px;">0</span>
<span class="t" style="left:1824.99px;top:993.23px;font-size:23px;line-height:30px;letter-spacing:0.294px;">2019-01-24</span>
<span class="t" style="left:1972.50px;top:993.23px;font-size:23px;line-height:30px;letter-spacing:-0.506px;">Black</span>
<span class="t" style="left:804.27px;top:1031.23px;font-size:23px;line-height:30px;letter-spacing:-0.326px;">320</span>
<span class="t" style="left:872.30px;top:1031.23px;font-size:23px;line-height:30px;letter-spacing:0.228px;">Chainring Bolts</span>
<span class="t" style="left:1130.30px;top:1031.23px;font-size:23px;line-height:30px;letter-spacing:-0.340px;">CB-2903</span>
<span class="t" style="left:1661.21px;top:1031.23px;font-size:23px;line-height:30px;letter-spacing:-0.393px;">0</span>
<span class="t" style="left:1824.99px;top:1031.23px;font-size:23px;line-height:30px;letter-spacing:0.294px;">2019-01-24</span>
<span class="t" style="left:1972.50px;top:1031.23px;font-size:23px;line-height:30px;letter-spacing:-0.431px;">Silver</span>
<span class="t" style="left:804.27px;top:1069.23px;font-size:23px;line-height:30px;letter-spacing:-0.326px;">321</span>
<span class="t" style="left:872.30px;top:1069.23px;font-size:23px;line-height:30px;letter-spacing:0.497px;">Chainring Nut</span>
<span class="t" style="left:1130.30px;top:1069.23px;font-size:23px;line-height:30px;letter-spacing:0.093px;">CN-6137</span>
<span class="t" style="left:1661.21px;top:1069.23px;font-size:23px;line-height:30px;letter-spacing:-0.393px;">0</span>
<span class="t" style="left:1824.99px;top:1069.23px;font-size:23px;line-height:30px;letter-spacing:0.294px;">2019-01-24</span>
<span class="t" style="left:1972.50px;top:1069.23px;font-size:23px;line-height:30px;letter-spacing:-0.431px;">Silver</span>
<span class="t" style="left:804.27px;top:1107.23px;font-size:23px;line-height:30px;letter-spacing:-0.326px;">322</span>
<span class="t" style="left:872.30px;top:1107.23px;font-size:23px;line-height:30px;letter-spacing:0.250px;">Chainring</span>
<span class="t" style="left:1130.30px;top:1107.23px;font-size:23px;line-height:30px;letter-spacing:-0.422px;">CR-7833</span>
<span class="t" style="left:1661.21px;top:1107.23px;font-size:23px;line-height:30px;letter-spacing:-0.393px;">0</span>
<span class="t" style="left:1824.99px;top:1107.23px;font-size:23px;line-height:30px;letter-spacing:0.294px;">2019-04-02</span>
<span class="t" style="left:1972.50px;top:1107.23px;font-size:23px;line-height:30px;letter-spacing:-0.506px;">Black</span>
<span class="t" style="left:804.27px;top:1145.23px;font-size:23px;line-height:30px;letter-spacing:-0.326px;">323</span>
<span class="t" style="left:872.30px;top:1145.23px;font-size:23px;line-height:30px;letter-spacing:-0.295px;">Crown Race</span>
<span class="t" style="left:1130.30px;top:1145.23px;font-size:23px;line-height:30px;letter-spacing:-0.422px;">CR-9981</span>
<span class="t" style="left:1661.21px;top:1145.23px;font-size:23px;line-height:30px;letter-spacing:-0.393px;">0</span>
<span class="t" style="left:1824.99px;top:1145.23px;font-size:23px;line-height:30px;letter-spacing:0.294px;">2019-04-20</span>
<span class="t" style="left:1972.50px;top:1145.23px;font-size:23px;line-height:30px;letter-spacing:0.566px;color:#b3b3b3;">[Null]</span>
<span class="t" style="left:804.27px;top:1183.23px;font-size:23px;line-height:30px;letter-spacing:-0.326px;">324</span>
<span class="t" style="left:872.30px;top:1183.23px;font-size:23px;line-height:30px;letter-spacing:-0.374px;">Chain Stays</span>
<span class="t" style="left:1130.30px;top:1183.23px;font-size:23px;line-height:30px;letter-spacing:-0.397px;">CS-2812</span>
<span class="t" style="left:1661.21px;top:1183.23px;font-size:23px;line-height:30px;letter-spacing:-0.393px;">1</span>
<span class="t" style="left:1824.99px;top:1183.23px;font-size:23px;line-height:30px;letter-spacing:0.294px;">2019-04-20</span>
<span class="t" style="left:1972.50px;top:1183.23px;font-size:23px;line-height:30px;letter-spacing:0.566px;color:#b3b3b3;">[Null]</span>
<span class="t" style="left:804.27px;top:1221.23px;font-size:23px;line-height:30px;letter-spacing:-0.326px;">325</span>
<span class="t" style="left:872.30px;top:1221.23px;font-size:23px;line-height:30px;letter-spacing:-0.370px;">Decal 1</span>
<span class="t" style="left:1130.30px;top:1221.23px;font-size:23px;line-height:30px;letter-spacing:-0.050px;">DC-8732</span>
<span class="t" style="left:1661.21px;top:1221.23px;font-size:23px;line-height:30px;letter-spacing:-0.393px;">0</span>
<span class="t" style="left:1824.99px;top:1221.23px;font-size:23px;line-height:30px;letter-spacing:0.294px;">2019-04-20</span>
<span class="t" style="left:1972.50px;top:1221.23px;font-size:23px;line-height:30px;letter-spacing:0.566px;color:#b3b3b3;">[Null]</span>
<span class="t" style="left:804.27px;top:1259.23px;font-size:23px;line-height:30px;letter-spacing:-0.326px;">326</span>
<span class="t" style="left:872.30px;top:1259.23px;font-size:23px;line-height:30px;letter-spacing:-0.213px;">Decal 2</span>
<span class="t" style="left:1130.30px;top:1259.23px;font-size:23px;line-height:30px;letter-spacing:-0.050px;">DC-9824</span>
<span class="t" style="left:1661.21px;top:1259.23px;font-size:23px;line-height:30px;letter-spacing:-0.393px;">0</span>
<span class="t" style="left:1824.99px;top:1259.23px;font-size:23px;line-height:30px;letter-spacing:0.294px;">2019-05-27</span>
<span class="t" style="left:1972.50px;top:1259.23px;font-size:23px;line-height:30px;letter-spacing:0.566px;color:#b3b3b3;">[Null]</span>
<span class="t" style="left:804.27px;top:1297.23px;font-size:23px;line-height:30px;letter-spacing:-0.326px;">327</span>
<span class="t" style="left:872.30px;top:1297.23px;font-size:23px;line-height:30px;letter-spacing:0.149px;">Down Tube</span>
<span class="t" style="left:1130.30px;top:1297.23px;font-size:23px;line-height:30px;letter-spacing:0.025px;">DT-2377</span>
<span class="t" style="left:1661.21px;top:1297.23px;font-size:23px;line-height:30px;letter-spacing:-0.393px;">1</span>
<span class="t" style="left:1824.99px;top:1297.23px;font-size:23px;line-height:30px;letter-spacing:0.294px;">2019-05-27</span>
<span class="t" style="left:1972.50px;top:1297.23px;font-size:23px;line-height:30px;letter-spacing:0.566px;color:#b3b3b3;">[Null]</span>
<span class="t" style="left:804.27px;top:1335.23px;font-size:23px;line-height:30px;letter-spacing:-0.326px;">328</span>
<span class="t" style="left:872.30px;top:1335.23px;font-size:23px;line-height:30px;letter-spacing:0.222px;">Mountain End Caps</span>
<span class="t" style="left:1130.30px;top:1335.23px;font-size:23px;line-height:30px;letter-spacing:-0.164px;">EC-M092</span>
<span class="t" style="left:1661.21px;top:1335.23px;font-size:23px;line-height:30px;letter-spacing:-0.393px;">1</span>
<span class="t" style="left:1824.99px;top:1335.23px;font-size:23px;line-height:30px;letter-spacing:0.294px;">2019-05-27</span>
<span class="t" style="left:1972.50px;top:1335.23px;font-size:23px;line-height:30px;letter-spacing:0.566px;color:#b3b3b3;">[Null]</span>
<span class="t" style="left:804.27px;top:1373.23px;font-size:23px;line-height:30px;letter-spacing:-0.326px;">329</span>
<span class="t" style="left:872.30px;top:1373.23px;font-size:23px;line-height:30px;letter-spacing:-0.476px;">Road End Caps</span>
<span class="t" style="left:1130.30px;top:1373.23px;font-size:23px;line-height:30px;letter-spacing:-0.164px;">EC-M090</span>
<span class="t" style="left:1661.21px;top:1373.23px;font-size:23px;line-height:30px;letter-spacing:-0.393px;">0</span>
<span class="t" style="left:1824.99px;top:1373.23px;font-size:23px;line-height:30px;letter-spacing:0.294px;">2019-05-27</span>
<span class="t" style="left:1972.50px;top:1373.23px;font-size:23px;line-height:30px;letter-spacing:0.566px;color:#b3b3b3;">[Null]</span>
</div>
<div id="frame"></div>
</body></html>
